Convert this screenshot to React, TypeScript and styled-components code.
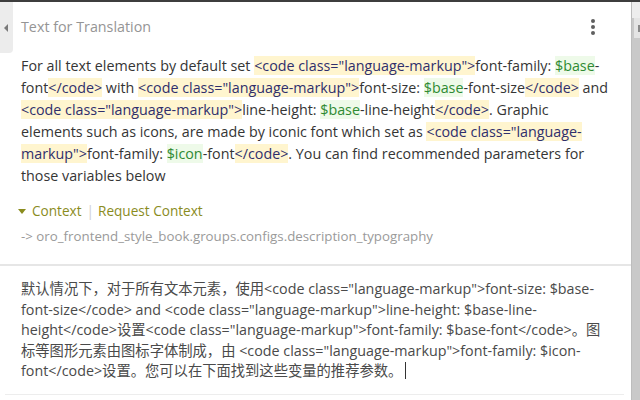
import React from 'react';
import styled, { createGlobalStyle } from 'styled-components';

const GlobalStyle = createGlobalStyle`
  html, body {
    margin: 0;
    padding: 0;
    background: #fff;
  }
  body {
    font-family: "Open Sans", "Noto Sans CJK SC", sans-serif;
    font-size: 14px;
  }
`;

const Page = styled.div`
  display: flex;
  height: 398px;
  border-top: 2px solid #3d3d3d;
  overflow: hidden;
`;

const Main = styled.div`
  flex: 1;
  display: flex;
  flex-direction: column;
  min-width: 0;
`;

const ScrollTrack = styled.div`
  width: 9px;
  display: flex;
  flex-direction: column;
  background: #c9c9c9;
  border-left: 1px solid #bdbdbd;
  box-sizing: border-box;
`;

const ScrollCap = styled.div`
  height: 16px;
  background: #ededed;
`;

const ScrollThumb = styled.div`
  height: 20px;
  margin-left: 2px;
  background: #e4e4e4;
  display: flex;
  justify-content: flex-end;
  padding-top: 7px;
  box-sizing: border-box;

  &::after {
    content: '';
    width: 2px;
    height: 7px;
    background: #8a8a8a;
  }
`;

const Header = styled.div`
  display: flex;
  align-items: flex-start;
  height: 53px;
`;

const CollapseTab = styled.button`
  width: 13px;
  height: 51px;
  padding: 0;
  border: none;
  background: #ececec;
  border-bottom-right-radius: 4px;
  display: flex;
  align-items: center;
  justify-content: center;
  cursor: pointer;

  &::before {
    content: '';
    border-top: 4px solid transparent;
    border-bottom: 4px solid transparent;
    border-right: 4px solid #7a7a7a;
    margin-right: 1px;
  }
`;

const Title = styled.h2`
  margin: 14px 0 0 8px;
  font-size: 14.3px;
  font-weight: 400;
  line-height: 22px;
  color: #959595;
`;

const Kebab = styled.button`
  margin: 17px 36px 0 auto;
  padding: 0;
  border: none;
  background: none;
  display: flex;
  flex-direction: column;
  gap: 2px;
  cursor: pointer;
`;

const Dot = styled.span`
  width: 4px;
  height: 4px;
  border-radius: 50%;
  background: #5f5f5f;
`;

const Source = styled.div`
  padding: 0 22px 17px 21px;
  border-bottom: 2px solid #e6e6e6;
`;

const Paragraph = styled.p`
  margin: 0;
  font-size: 14.3px;
  line-height: 22px;
  color: #353535;
`;

const Tag = styled.span`
  background: #fff5cf;
  color: #2f2f6c;
`;

const Var = styled.span`
  background: #eefae9;
  color: #2f8a33;
`;

const ContextRow = styled.div`
  margin-top: 13px;
  display: flex;
  align-items: center;
  font-size: 13.6px;
  line-height: 22px;
  color: #8a8c1e;
`;

const Caret = styled.span`
  width: 0;
  height: 0;
  margin: 0 6px 0 -3px;
  border-left: 4px solid transparent;
  border-right: 4px solid transparent;
  border-top: 5px solid #8a8c1e;
`;

const Separator = styled.span`
  margin: 0 4px 0 5px;
  color: #cfcfcf;
`;

const PathLine = styled.div`
  margin-top: 3px;
  font-size: 13.3px;
  line-height: 22px;
  color: #9a9a9a;
`;

const Translation = styled.div`
  margin: 0 7px 0 5px;
  padding: 13px 15px 12px 16px;
  border-bottom: 1px solid #ededed;
  font-size: 14.3px;
  line-height: 20.5px;
  color: #4a4a4a;
`;

const Cursor = styled.span`
  display: inline-block;
  width: 1px;
  height: 17px;
  margin-left: 3px;
  vertical-align: -3px;
  background: #333;
`;

const OPEN = '<code class="language-markup">';
const CLOSE = '</code>';

function App() {
  return (
    <>
      <GlobalStyle />
      <Page>
        <Main>
          <Header>
            <CollapseTab aria-label="collapse" />
            <Title>Text for Translation</Title>
            <Kebab aria-label="more">
              <Dot />
              <Dot />
              <Dot />
            </Kebab>
          </Header>
          <Source>
            <Paragraph>
              For all text elements by default set <Tag>{OPEN}</Tag>font-family: <Var>$base</Var>-font
              <Tag>{CLOSE}</Tag> with <Tag>{OPEN}</Tag>font-size: <Var>$base</Var>-font-size<Tag>{CLOSE}</Tag> and{' '}
              <Tag>{OPEN}</Tag>line-height: <Var>$base</Var>-line-height<Tag>{CLOSE}</Tag>. Graphic elements such as
              icons, are made by iconic font which set as <Tag>{OPEN}</Tag>font-family: <Var>$icon</Var>-font
              <Tag>{CLOSE}</Tag>. You can find recommended parameters for those variables below
            </Paragraph>
            <ContextRow>
              <Caret />
              Context
              <Separator>|</Separator>
              Request Context
            </ContextRow>
            <PathLine>-&gt; oro_frontend_style_book.groups.configs.description_typography</PathLine>
          </Source>
          <Translation>
            默认情况下，对于所有文本元素，使用{OPEN}font-size: $base-font-size{CLOSE} and {OPEN}line-height:
            $base-line-height{CLOSE}设置{OPEN}font-family: $base-font{CLOSE}。图标等图形元素由图标字体制成，由 {OPEN}
            font-family: $icon-font{CLOSE}设置。您可以在下面找到这些变量的推荐参数。
            <Cursor />
          </Translation>
        </Main>
        <ScrollTrack>
          <ScrollCap />
          <ScrollThumb />
        </ScrollTrack>
      </Page>
    </>
  );
}

export default App;
